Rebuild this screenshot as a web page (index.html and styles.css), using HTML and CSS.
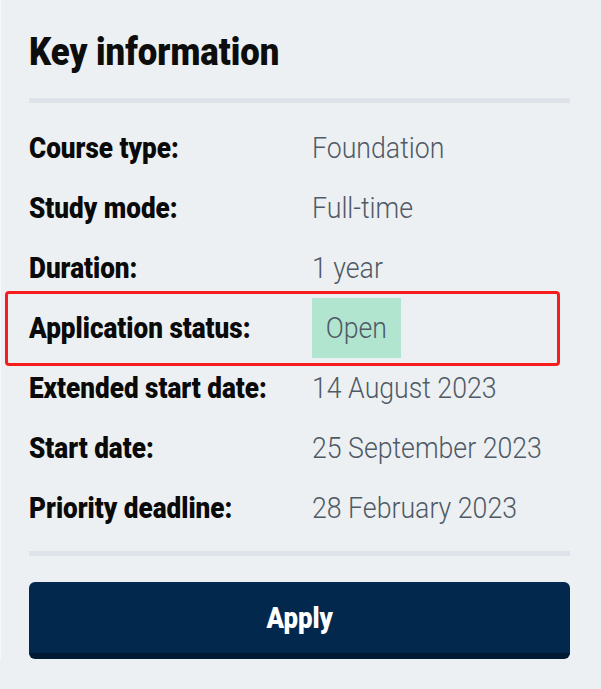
FILE: index.html
```html
<!DOCTYPE html>
<html lang="en">
<head>
    <meta charset="UTF-8">
    <meta name="viewport" content="width=device-width, initial-scale=1.0">
    <title>Key information</title>
    <link rel="stylesheet" href="styles.css">
</head>
<body>
    <div class="card">
        <h2 class="card-title"><span class="narrow">Key information</span></h2>

        <dl class="info-list">
            <div class="info-row">
                <dt><span class="narrow">Course type:</span></dt>
                <dd><span class="narrow">Foundation</span></dd>
            </div>
            <div class="info-row">
                <dt><span class="narrow">Study mode:</span></dt>
                <dd><span class="narrow">Full-time</span></dd>
            </div>
            <div class="info-row">
                <dt><span class="narrow">Duration:</span></dt>
                <dd><span class="narrow">1 year</span></dd>
            </div>
            <div class="info-row highlight">
                <dt><span class="narrow">Application status:</span></dt>
                <dd><span class="status status-open"><span class="narrow">Open</span></span></dd>
            </div>
            <div class="info-row">
                <dt><span class="narrow">Extended start date:</span></dt>
                <dd><span class="narrow">14 August 2023</span></dd>
            </div>
            <div class="info-row">
                <dt><span class="narrow">Start date:</span></dt>
                <dd><span class="narrow">25 September 2023</span></dd>
            </div>
            <div class="info-row">
                <dt><span class="narrow">Priority deadline:</span></dt>
                <dd><span class="narrow">28 February 2023</span></dd>
            </div>
        </dl>

        <a href="#" class="btn-apply"><span class="narrow">Apply</span></a>
    </div>
</body>
</html>
```

FILE: styles.css
```css
body {
    margin: 0;
    background: #edf0f2;
    font-family: Roboto, "Liberation Sans", sans-serif;
}
/* no condensed face installed, so squeeze the text */
.narrow {
    display: inline-block;
    transform: scaleX(0.9);
    transform-origin: 0 50%;
}
.card {
    padding: 24px 31px 0 28px;
    border-left: 1px solid #f7f8f9;
}
.card-title {
    margin: 0;
    padding-bottom: 18px;
    border-bottom: 5px solid #dde3e8;
    font-size: 39px;
    line-height: 56px;
    font-weight: 900;
    color: #0d0d0d;
    white-space: nowrap;
}
.card-title .narrow { transform: scaleX(0.89); }
.info-list {
    margin: 15px 0 0;
    padding-bottom: 13px;
    border-bottom: 5px solid #dde3e8;
}
.info-row {
    display: grid;
    grid-template-columns: 283px 1fr;
    align-items: center;
    height: 60px;
    white-space: nowrap;
}
.info-row dt {
    font-size: 29px;
    font-weight: 900;
    color: #0a0a0a;
}
.info-row dd {
    margin: 0;
    font-size: 29px;
    font-weight: 300;
    color: #4f5a66;
}
.info-row dd .narrow { transform: scaleX(0.92); }
.status {
    display: inline-block;
    padding: 0 11px;
    line-height: 60px;
}
.status .narrow { transform-origin: 50% 50%; }
.status-open { background: #b1e5d0; }

/* red annotation frame around the status row */
.highlight { position: relative; }
.highlight::after {
    content: "";
    position: absolute;
    left: -24px;
    top: -7px;
    width: 555px;
    height: 75px;
    box-sizing: border-box;
    border: 3px solid #f81d1d;
    border-radius: 4px;
}
.btn-apply {
    display: block;
    margin-top: 26px;
    height: 71px;
    line-height: 71px;
    background: #03284d;
    border-bottom: 6px solid #011a33;
    border-radius: 6px;
    color: #fff;
    text-align: center;
    text-decoration: none;
    font-size: 30px;
    font-weight: 900;
}
.btn-apply .narrow {
    transform: scaleX(0.86);
    transform-origin: 50% 50%;
}
```
